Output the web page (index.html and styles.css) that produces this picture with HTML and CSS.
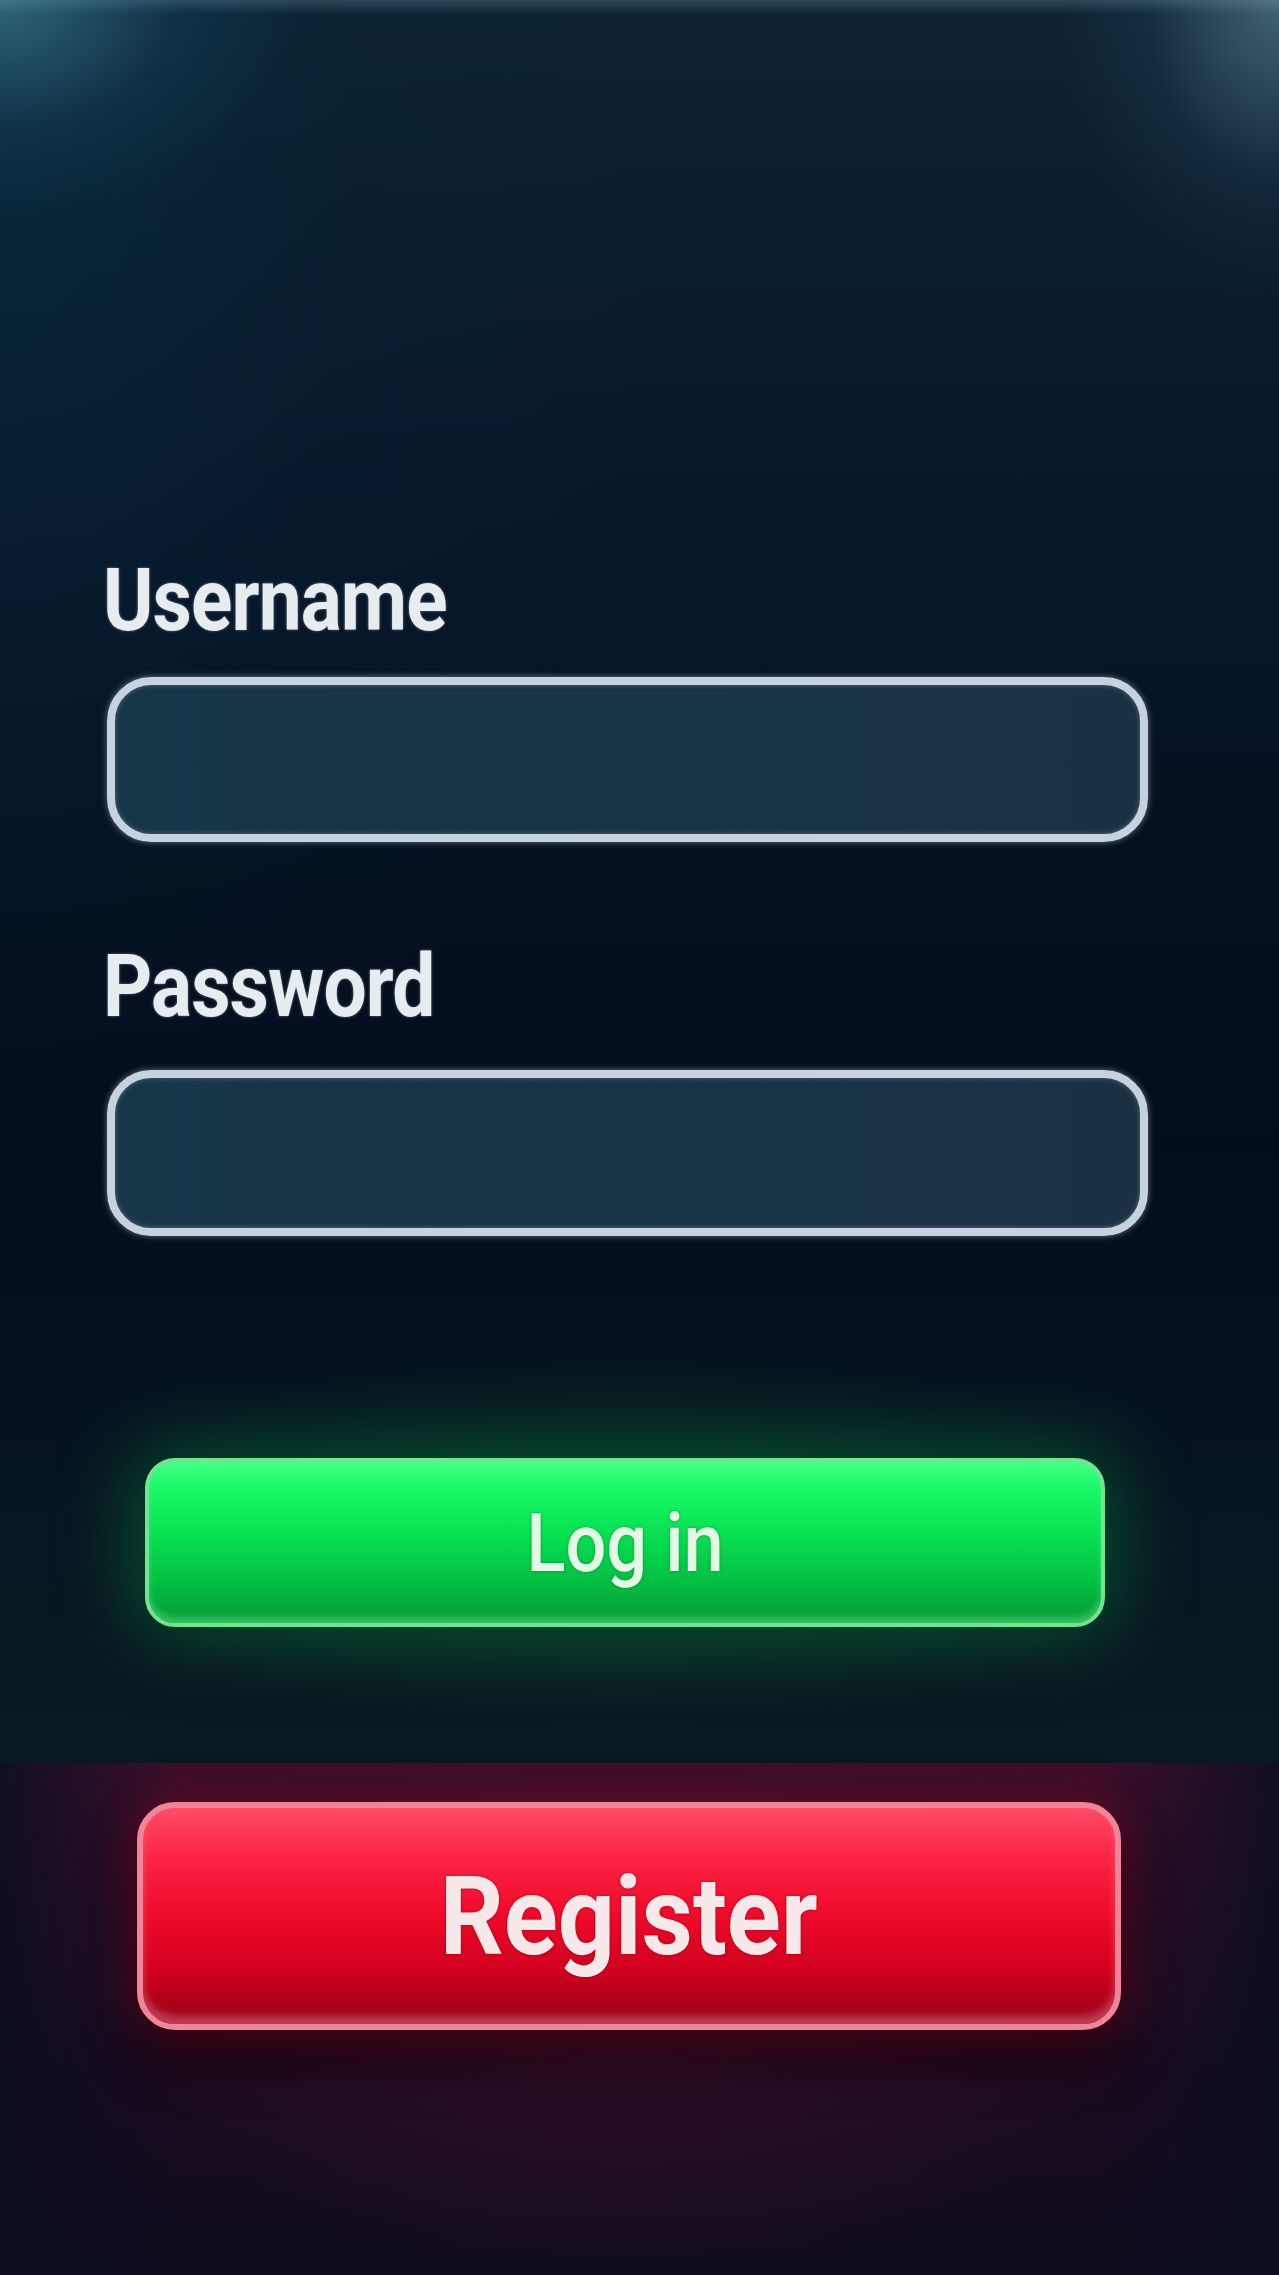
FILE: index.html
```html
<!DOCTYPE html>
<html lang="en">
<head>
<meta charset="utf-8">
<title>Log in</title>
<link rel="stylesheet" href="styles.css">
</head>
<body>
<main class="screen">
  <section class="panel">
    <form class="login-form">
      <label class="field-label" for="username">Username</label>
      <input class="field-input" id="username" type="text">
      <label class="field-label field-label--second" for="password">Password</label>
      <input class="field-input field-input--second" id="password" type="password">
      <button class="btn btn-login" type="button"><span class="btn-text">Log in</span></button>
    </form>
  </section>
  <section class="register-band">
    <button class="btn btn-register" type="button"><span class="btn-text">Register</span></button>
  </section>
</main>
</body>
</html>
```
FILE: styles.css
```css
* { box-sizing: border-box; }
html, body { margin: 0; padding: 0; }
body {
  background: #060f1c;
  font-family: Roboto, "Liberation Sans", sans-serif;
}
.screen {
  width: 1279px;
  height: 2275px;
  display: flex;
  flex-direction: column;
  overflow: hidden;
}
.panel {
  flex: none;
  height: 1763px;
  padding: 557px 130px 0 103px;
  background:
    radial-gradient(ellipse 300px 220px at 0 0, rgba(80,150,170,0.55), rgba(30,90,120,0.18) 60%, transparent 100%),
    radial-gradient(ellipse 220px 300px at 100% 0, rgba(120,160,180,0.5), rgba(60,100,130,0.15) 60%, transparent 100%),
    linear-gradient(180deg, rgba(140,180,200,0.25) 0px, transparent 14px),
    radial-gradient(ellipse 760px 260px at 625px 1540px, rgba(14,80,45,0.45), transparent 75%),
    radial-gradient(ellipse 650px 1100px at 0 150px, rgba(8,48,68,0.5), rgba(8,40,60,0.15) 55%, transparent 100%),
    linear-gradient(180deg, #0e2434 0%, #0a1e2e 12%, #07172a 28%, #061222 45%, #040d1c 65%, #071520 85%, #0a1820 100%);
}
.login-form {
  display: flex;
  flex-direction: column;
  align-items: flex-start;
}
.field-label {
  display: block;
  font-size: 87px;
  line-height: 87px;
  font-weight: 700;
  color: #e6ecf0;
  letter-spacing: -1px;
  transform: scaleX(0.88);
  transform-origin: left center;
  text-shadow: 0 0 3px rgba(230,240,245,0.45);
}
.field-label--second { margin-top: 101px; }
.field-input {
  display: block;
  width: 1041px;
  height: 165px;
  margin: 33px 0 0 4px;
  border: 8px solid #c6d2df;
  border-radius: 44px;
  background: linear-gradient(90deg, #173648 0%, #183447 50%, #1a3143 100%);
  box-shadow: 0 0 6px rgba(200,215,230,0.5), inset 0 0 5px rgba(200,215,230,0.35);
  outline: none;
}
.field-input--second {
  height: 166px;
  margin-top: 40px;
}
.btn {
  display: flex;
  align-items: center;
  justify-content: center;
  padding: 0;
  cursor: pointer;
  font-family: Roboto, "Liberation Sans", sans-serif;
}
.btn-text { display: inline-block; }
.btn-login {
  margin: 222px 0 0 42px;
  width: 960px;
  height: 169px;
  border: 4px solid #6fe58e;
  border-radius: 30px;
  background: linear-gradient(180deg, #45ff86 0%, #17f865 18%, #07e052 45%, #03bf42 75%, #059a35 100%);
  box-shadow: 0 0 70px 18px rgba(0,150,70,0.35), inset 0 -6px 6px rgba(120,230,150,0.45);
  color: #e4f8e6;
  font-size: 82px;
  font-weight: 500;
}
.btn-login .btn-text {
  transform: scaleX(0.88);
  text-shadow: 0 0 3px rgba(0,80,20,0.5);
}
.register-band {
  flex: 1;
  padding: 39px 0 0 137px;
  background:
    radial-gradient(ellipse 620px 380px at 630px 230px, rgba(70,14,44,0.5), transparent 80%),
    linear-gradient(90deg, rgba(10,14,32,0.85) 0%, transparent 14%, transparent 86%, rgba(10,14,32,0.85) 100%),
    linear-gradient(180deg, #3c0f2a 0%, #2c0c24 30%, #1c0b1f 60%, #0e0d1c 100%);
}
.btn-register {
  width: 984px;
  height: 228px;
  border: 6px solid #ef8698;
  border-radius: 38px;
  background: linear-gradient(180deg, #ff4d68 0%, #fb2444 22%, #ef0a2a 50%, #cd001c 78%, #93001a 100%);
  box-shadow: 0 0 40px 6px rgba(190,0,40,0.3), 0 30px 50px rgba(20,0,8,0.7), inset 0 -8px 8px rgba(240,140,160,0.45);
  color: #f7e8ea;
  font-size: 110px;
  font-weight: 700;
}
.btn-register .btn-text {
  transform: scaleX(0.91);
  text-shadow: 0 0 3px rgba(90,0,10,0.5);
}
```
